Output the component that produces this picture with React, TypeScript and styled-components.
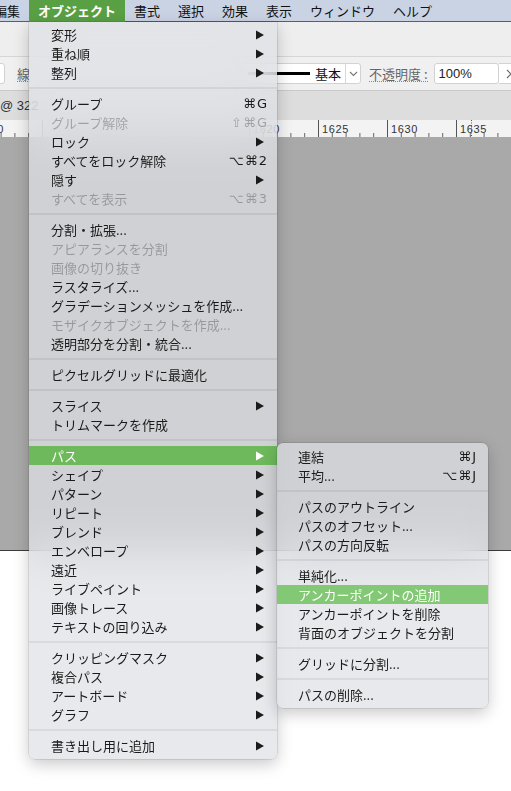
import { createGlobalStyle } from "styled-components";
import styled from "styled-components";

const GlobalStyle = createGlobalStyle`
  html, body {
    margin: 0;
    padding: 0;
    background: #ffffff;
  }
  body {
    font-family: "Noto Sans CJK JP", "Noto Sans", sans-serif;
  }
`;

const Page = styled.div`
  position: relative;
  width: 511px;
  height: 791px;
  overflow: hidden;
  background: #ffffff;
`;

const MenuBar = styled.div`
  display: flex;
  height: 21px;
  background: #cad3e4;
  border-bottom: 1px solid #55606f;
  font-size: 13px;
  line-height: 21px;
  color: #111;
`;

const MenuTitle = styled.div<{ $open?: boolean; $first?: boolean }>`
  padding: 0 9px;
  height: 22px;
  margin-left: ${(p) => (p.$first ? "-15px" : "0")};
  background: ${(p) => (p.$open ? "#59a044" : "transparent")};
  color: ${(p) => (p.$open ? "#ffffff" : "#111")};
  font-weight: ${(p) => (p.$open ? 700 : 400)};
  white-space: nowrap;
`;

const Toolbar = styled.div`
  height: 34px;
  background: #eeeeee;
  border-bottom: 1px solid #d6d6d6;
`;

const ControlBar = styled.div`
  display: flex;
  align-items: center;
  height: 33px;
  background: #f0f0f0;
  border-bottom: 1px solid #c9c9c9;
  font-size: 13px;
  color: #222;
`;

const Field = styled.div<{ $w: number }>`
  display: flex;
  align-items: center;
  box-sizing: border-box;
  width: ${(p) => p.$w}px;
  height: 21px;
  background: #ffffff;
  border: 1px solid #d2d2d2;
  border-radius: 3px;
  flex-shrink: 0;
`;

const StubField = styled(Field)`
  margin-left: -20px;
`;

const FieldLabel = styled.span<{ $gap: number }>`
  margin-left: ${(p) => p.$gap}px;
  color: #666;
  border-bottom: 1px dotted #888;
  line-height: 15px;
  white-space: nowrap;
`;

const StrokeSelect = styled(Field)`
  margin-left: 211px;
  padding-left: 6px;
`;

const StrokeLine = styled.div`
  width: 62px;
  height: 3px;
  background: #000;
`;

const StrokeName = styled.span`
  margin-left: 5px;
  width: 30px;
  color: #111;
`;

const Divider = styled.div`
  width: 1px;
  align-self: stretch;
  background: #d8d8d8;
`;

const ChevronCell = styled.div`
  flex: 1;
  display: flex;
  justify-content: center;
  color: #666;
`;

const OpacityField = styled(Field)`
  margin-left: 6px;
  padding-left: 4px;
  font-family: "Liberation Sans", "Noto Sans", sans-serif;
  font-size: 13px;
  color: #222;
`;

const StepButton = styled(Field)`
  justify-content: center;
  border-left: none;
  border-radius: 0 3px 3px 0;
  color: #555;
`;

const DocTabBar = styled.div`
  height: 29px;
  background: #dddddd;
  display: flex;
  align-items: center;
  font-family: "Liberation Sans", "Noto Sans", sans-serif;
  font-size: 13px;
  color: #333;
  white-space: nowrap;
`;

const RulerStrip = styled.div`
  height: 17px;
  background: #f3f3f3;
  line-height: 0;
`;

const Canvas = styled.div`
  height: 413px;
  background: #a9a9a9;
  border-bottom: 1px solid #3c3c3c;
`;

const MenuPanel = styled.div<{ $w: number; $x: number; $y: number; $sub?: boolean }>`
  position: absolute;
  left: ${(p) => p.$x}px;
  top: ${(p) => p.$y}px;
  width: ${(p) => p.$w}px;
  box-sizing: border-box;
  padding: ${(p) => (p.$sub ? "4px 0 4px" : "3px 0 4px")};
  background: rgba(223, 225, 229, 0.72);
  backdrop-filter: blur(24px);
  -webkit-backdrop-filter: blur(24px);
  border-radius: ${(p) => (p.$sub ? "6px" : "0 0 6px 6px")};
  box-shadow: 0 0 0 0.5px rgba(0, 0, 0, 0.18), 0 5px 16px rgba(0, 0, 0, 0.22);
  font-size: 13px;
`;

const Row = styled.div<{ $disabled?: boolean; $hl?: string; $pl: number; $pr: number }>`
  display: flex;
  align-items: center;
  height: 19px;
  line-height: 19px;
  padding: 0 ${(p) => p.$pr}px 0 ${(p) => p.$pl}px;
  background: ${(p) => p.$hl || "transparent"};
  color: ${(p) => (p.$hl ? "#ffffff" : p.$disabled ? "rgba(0,0,0,0.27)" : "#1b1b1b")};
  white-space: nowrap;
`;

const Label = styled.span`
  flex: 1;
`;

const Shortcut = styled.span`
  font-family: "DejaVu Sans", "Liberation Sans", sans-serif;
  font-size: 13px;
  letter-spacing: 1px;
`;

const Separator = styled.div`
  height: 12px;
  display: flex;
  align-items: center;
  &::after {
    content: "";
    flex: 1;
    height: 2px;
    background: rgba(0, 0, 0, 0.065);
  }
`;

type Entry =
  | "sep"
  | {
      label: string;
      shortcut?: string;
      arrow?: boolean;
      disabled?: boolean;
      active?: boolean;
    };

const mainItems: Entry[] = [
  { label: "変形", arrow: true },
  { label: "重ね順", arrow: true },
  { label: "整列", arrow: true },
  "sep",
  { label: "グループ", shortcut: "⌘G" },
  { label: "グループ解除", shortcut: "⇧⌘G", disabled: true },
  { label: "ロック", arrow: true },
  { label: "すべてをロック解除", shortcut: "⌥⌘2" },
  { label: "隠す", arrow: true },
  { label: "すべてを表示", shortcut: "⌥⌘3", disabled: true },
  "sep",
  { label: "分割・拡張..." },
  { label: "アピアランスを分割", disabled: true },
  { label: "画像の切り抜き", disabled: true },
  { label: "ラスタライズ..." },
  { label: "グラデーションメッシュを作成..." },
  { label: "モザイクオブジェクトを作成...", disabled: true },
  { label: "透明部分を分割・統合..." },
  "sep",
  { label: "ピクセルグリッドに最適化" },
  "sep",
  { label: "スライス", arrow: true },
  { label: "トリムマークを作成" },
  "sep",
  { label: "パス", arrow: true, active: true },
  { label: "シェイプ", arrow: true },
  { label: "パターン", arrow: true },
  { label: "リピート", arrow: true },
  { label: "ブレンド", arrow: true },
  { label: "エンベロープ", arrow: true },
  { label: "遠近", arrow: true },
  { label: "ライブペイント", arrow: true },
  { label: "画像トレース", arrow: true },
  { label: "テキストの回り込み", arrow: true },
  "sep",
  { label: "クリッピングマスク", arrow: true },
  { label: "複合パス", arrow: true },
  { label: "アートボード", arrow: true },
  { label: "グラフ", arrow: true },
  "sep",
  { label: "書き出し用に追加", arrow: true },
];

const pathItems: Entry[] = [
  { label: "連結", shortcut: "⌘J" },
  { label: "平均...", shortcut: "⌥⌘J" },
  "sep",
  { label: "パスのアウトライン" },
  { label: "パスのオフセット..." },
  { label: "パスの方向反転" },
  "sep",
  { label: "単純化..." },
  { label: "アンカーポイントの追加", active: true },
  { label: "アンカーポイントを削除" },
  { label: "背面のオブジェクトを分割" },
  "sep",
  { label: "グリッドに分割..." },
  "sep",
  { label: "パスの削除..." },
];

function Arrow({ color }: { color: string }) {
  return (
    <svg width="8" height="10" viewBox="0 0 8 10" style={{ marginRight: 4 }}>
      <polygon points="0,0.5 8,5 0,9.5" fill={color} />
    </svg>
  );
}

function Menu({
  items,
  width,
  x,
  y,
  sub,
  highlight,
}: {
  items: Entry[];
  width: number;
  x: number;
  y: number;
  sub?: boolean;
  highlight: string;
}) {
  return (
    <MenuPanel $w={width} $x={x} $y={y} $sub={sub}>
      {items.map((item, i) => {
        if (item === "sep") return <Separator key={i} />;
        return (
          <Row
            key={i}
            $disabled={item.disabled}
            $hl={item.active ? highlight : undefined}
            $pl={sub ? 21 : 22}
            $pr={sub ? 11 : 9}
          >
            <Label>{item.label}</Label>
            {item.shortcut && <Shortcut>{item.shortcut}</Shortcut>}
            {item.arrow && <Arrow color={item.active ? "#ffffff" : "#1b1b1b"} />}
          </Row>
        );
      })}
    </MenuPanel>
  );
}

// labels that sit fully under the open menu are left out (they can't be seen)
const hiddenLabels = [1605, 1610, 1615];

function Ruler() {
  const majors = [];
  for (let k = 0; k < 8; k++) {
    const x = -27 + 69 * k;
    majors.push({ x, value: 1600 + 5 * k });
  }
  return (
    <svg width="511" height="17" viewBox="0 0 511 17">
      {majors.map((m) => (
        <g key={m.value}>
          <line x1={m.x + 0.5} y1="0" x2={m.x + 0.5} y2="17" stroke="#555" strokeWidth="1" />
          {[1, 2, 3, 4].map((j) => (
            <line
              key={j}
              x1={m.x + 13.8 * j + 0.5}
              y1="13"
              x2={m.x + 13.8 * j + 0.5}
              y2="17"
              stroke="#666"
              strokeWidth="1"
            />
          ))}
          {!hiddenLabels.includes(m.value) && (
            <text
              x={m.x + 4}
              y="13"
              fontSize="11"
              fontFamily="Liberation Sans, sans-serif"
              fill="#333"
              letterSpacing="0.6"
            >
              {m.value}
            </text>
          )}
        </g>
      ))}
      <line x1="471.5" y1="0" x2="471.5" y2="17" stroke="#555" strokeDasharray="1 1.5" />
    </svg>
  );
}

export default function App() {
  return (
    <>
      <GlobalStyle />
      <Page>
        <MenuBar>
          <MenuTitle $first>編集</MenuTitle>
          <MenuTitle $open>オブジェクト</MenuTitle>
          <MenuTitle>書式</MenuTitle>
          <MenuTitle>選択</MenuTitle>
          <MenuTitle>効果</MenuTitle>
          <MenuTitle>表示</MenuTitle>
          <MenuTitle>ウィンドウ</MenuTitle>
          <MenuTitle>ヘルプ</MenuTitle>
        </MenuBar>
        <Toolbar />
        <ControlBar>
          <StubField $w={25} />
          <FieldLabel $gap={12}>線</FieldLabel>
          <StrokeSelect $w={120}>
            <StrokeLine />
            <StrokeName>基本</StrokeName>
            <Divider />
            <ChevronCell>
              <svg width="9" height="6" viewBox="0 0 9 6">
                <polyline points="1,1 4.5,4.5 8,1" fill="none" stroke="#777" strokeWidth="1.1" />
              </svg>
            </ChevronCell>
          </StrokeSelect>
          <FieldLabel $gap={8}>不透明度 :</FieldLabel>
          <OpacityField $w={65}>100%</OpacityField>
          <StepButton $w={22}>
            <svg width="6" height="10" viewBox="0 0 6 10">
              <polyline points="1,1 5,5 1,9" fill="none" stroke="#666" strokeWidth="1.1" />
            </svg>
          </StepButton>
        </ControlBar>
        <DocTabBar>@ 322</DocTabBar>
        <RulerStrip>
          <Ruler />
        </RulerStrip>
        <Canvas />
        <Menu items={mainItems} width={248} x={29} y={22} highlight="#6db95b" />
        <Menu items={pathItems} width={211} x={277} y={443} sub highlight="#83c874" />
      </Page>
    </>
  );
}
